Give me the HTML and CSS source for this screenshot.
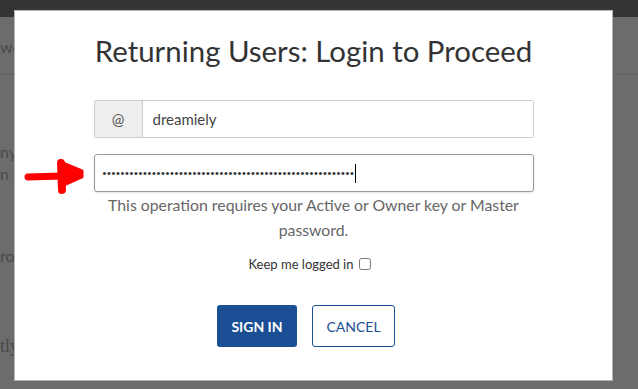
FILE: index.html
```html
<!DOCTYPE html>
<html lang="en">
<head>
  <meta charset="UTF-8">
  <title>Login</title>
  <link rel="stylesheet" href="styles.css">
</head>
<body>
  <!-- page behind the dialog -->
  <div class="topbar"></div>
  <div class="page">
    <div class="page-head">words</div>
    <p class="line l1">nyone</p>
    <p class="line l2">n account</p>
    <p class="line l3">rol</p>
    <p class="line l4">tly</p>
  </div>

  <div class="modal">
    <h2 class="title">Returning Users: Login to Proceed</h2>
    <form class="login-form">
      <div class="input-group">
        <span class="addon">@</span>
        <input class="field" type="text" value="dreamiely">
      </div>
      <div class="pass">
        <span class="dots">••••••••••••••••••••••••••••••••••••••••••••••••••••••••</span><span class="caret"></span>
      </div>
      <p class="help">This operation requires your Active or Owner key or Master password.</p>
      <label class="keep">Keep me logged in <input type="checkbox"></label>
      <div class="actions">
        <button type="button" class="btn btn-primary">SIGN IN</button>
        <button type="button" class="btn btn-outline">CANCEL</button>
      </div>
    </form>
  </div>

  <!-- red arrow scribbled on the screenshot -->
  <svg class="arrow" width="64" height="40" viewBox="0 0 64 40">
    <path d="M4 19 L38 18" stroke="#f00" stroke-width="7" stroke-linecap="round" fill="none"/>
    <path d="M37 5 L38 32" stroke="#f00" stroke-width="8" stroke-linecap="round" fill="none"/>
    <path d="M36 4 L58 13 L58 19 L40 27 Z" fill="#f00" stroke="#f00" stroke-width="3" stroke-linejoin="round"/>
  </svg>
</body>
</html>
```

FILE: styles.css
```css
/***----BASIC----***/
body {
  margin: 0;
  height: 389px;
  overflow: hidden;
  background: #6c6c6c;
  font-family: 'Lato', 'Open Sans', sans-serif;
  position: relative;
}

/***----Page behind----***/
.topbar {
  height: 17px;
  background: #343434;
}
.page {
  color: #4a4a4a;
  font-size: 16px;
}
.page-head {
  height: 57px;
  line-height: 60px;
  border-bottom: 1px solid #5f5f5f;
}
.line {
  margin: 0;
  line-height: 22px;
}
.l1 { margin-top: 66px; }
.l3 { margin-top: 60px; }
.l4 { margin-top: 68px; font-family: 'Liberation Serif', serif; font-size: 18px; }

/***----Modal----***/
.modal {
  position: absolute;
  left: 14px;
  top: 10px;
  width: 597px;
  height: 369px;
  background: #fff;
  border: 1px solid #b5b5b5;
  display: flex;
  flex-direction: column;
  align-items: center;
}
.title {
  margin: 22px 0 0;
  font-size: 29.4px;
  font-weight: 400;
  line-height: 36px;
  color: #333;
}
.login-form {
  width: 440px;
  margin-top: 31px;
  display: flex;
  flex-direction: column;
  align-items: center;
}

.input-group {
  width: 100%;
  height: 38px;
  display: flex;
  border: 1px solid #ccc;
  border-radius: 2px;
  box-sizing: border-box;
}
.addon {
  width: 47px;
  background: #eee;
  border-right: 1px solid #ccc;
  display: flex;
  align-items: center;
  justify-content: center;
  color: #555;
  font-size: 15px;
}
.field {
  flex: 1;
  border: none;
  padding: 0 10px;
  font-family: inherit;
  font-size: 15px;
  color: #444;
  outline: none;
}
.pass {
  width: 100%;
  height: 38px;
  margin-top: 16px;
  box-sizing: border-box;
  border: 1px solid #999;
  border-radius: 3px;
  padding: 0 8px;
  display: flex;
  align-items: center;
  box-shadow: 0 1px 2px rgba(0, 0, 0, 0.12);
}
.dots {
  font-family: 'Liberation Sans', sans-serif;
  font-size: 11px;
  letter-spacing: 0.65px;
  color: #333;
}
.caret {
  width: 1px;
  height: 19px;
  background: #000;
}

.help {
  margin: 0;
  width: 440px;
  text-align: center;
  font-size: 15.8px;
  line-height: 25px;
  color: #666;
}
.keep {
  margin-top: 14px;
  margin-right: 8px;
  font-size: 13px;
  color: #333;
  display: flex;
  align-items: center;
  gap: 5px;
}
.keep input {
  margin: 0;
  width: 12px;
  height: 12px;
}

/***----Buttons----***/
.actions {
  margin-top: 33px;
  margin-right: 15px;
  display: flex;
  gap: 15px;
}
.btn {
  height: 42px;
  border-radius: 3px;
  font-family: inherit;
  font-size: 14px;
  cursor: pointer;
}
.btn-primary {
  width: 80px;
  background: #1a4f95;
  color: #fff;
  border: none;
  font-weight: 700;
}
.btn-outline {
  width: 83px;
  background: #fff;
  color: #1a4f95;
  border: 1px solid #1a4f95;
}

/***----Arrow----***/
.arrow {
  position: absolute;
  left: 24px;
  top: 158px;
}
```
